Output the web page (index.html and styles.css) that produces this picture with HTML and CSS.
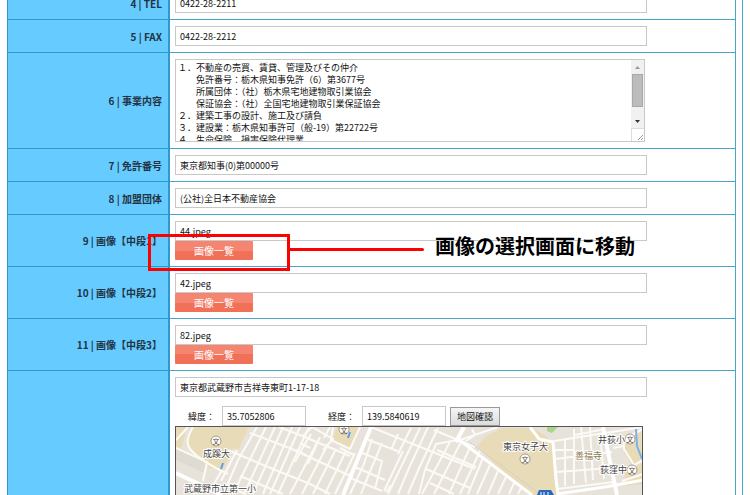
FILE: index.html
```html
<!DOCTYPE html>
<html lang="ja">
<head>
<meta charset="utf-8">
<title>会社情報</title>
<link rel="stylesheet" href="styles.css">
</head>
<body>
<main class="page">
<form>
<table class="form-table">
<tr>
  <th scope="row"><label for="tel">4 | TEL</label></th>
  <td><input class="field" id="tel" type="text" value="0422-28-2211"></td>
</tr>
<tr>
  <th scope="row"><label for="fax">5 | FAX</label></th>
  <td><input class="field" id="fax" type="text" value="0422-28-2212"></td>
</tr>
<tr>
  <th scope="row"><label for="business">6 | 事業内容</label></th>
  <td>
    <div class="area-wrap">
<textarea class="area" id="business">１．不動産の売買、賃貸、管理及びその仲介
　　免許番号：栃木県知事免許（6）第3677号
　　所属団体：（社）栃木県宅地建物取引業協会
　　保証協会：（社）全国宅地建物取引業保証協会
２．建築工事の設計、施工及び請負
３．建設業：栃木県知事許可（般-19）第22722号
４．生命保険、損害保険代理業</textarea>
      <svg class="scroll" width="13" height="81" viewBox="0 0 13 81" aria-hidden="true">
        <rect width="13" height="68" fill="#f1f1f1"/>
        <path d="M4 9L6.500 6L9 9Z" fill="#999"/>
        <rect x="1.500" y="14.500" width="10" height="32" fill="#bcbcbc" stroke="#a8a8a8"/>
        <path d="M4 60H9L6.500 63Z" fill="#333"/>
        <path d="M0 68H13V81H0Z" fill="#fff"/>
        <path d="M0.500 81V68.500H13" fill="none" stroke="#ddd"/>
        <path d="M7 80L12 75M10 80L12 78" stroke="#999" fill="none"/>
      </svg>
    </div>
  </td>
</tr>
<tr>
  <th scope="row"><label for="license">7 | 免許番号</label></th>
  <td><input class="field" id="license" type="text" value="東京都知事(0)第00000号"></td>
</tr>
<tr>
  <th scope="row"><label for="group">8 | 加盟団体</label></th>
  <td><input class="field" id="group" type="text" value="(公社)全日本不動産協会"></td>
</tr>
<tr>
  <th scope="row"><label for="img1">9 | 画像【中段1】</label></th>
  <td class="anchor">
    <input class="field" id="img1" type="text" value="44.jpeg">
    <button class="pick" type="button">画像一覧</button>
    <div class="note"><span class="note-box"></span><span class="note-line"></span><span class="note-text">画像の選択画面に移動</span></div>
  </td>
</tr>
<tr>
  <th scope="row"><label for="img2">10 | 画像【中段2】</label></th>
  <td>
    <input class="field" id="img2" type="text" value="42.jpeg">
    <button class="pick" type="button">画像一覧</button>
  </td>
</tr>
<tr>
  <th scope="row"><label for="img3">11 | 画像【中段3】</label></th>
  <td>
    <input class="field" id="img3" type="text" value="82.jpeg">
    <button class="pick" type="button">画像一覧</button>
  </td>
</tr>
<tr class="last">
  <th></th>
  <td>
    <input class="field" type="text" aria-label="住所" value="東京都武蔵野市吉祥寺東町1-17-18">
    <div class="coords">
      <label for="lat">緯度：</label><input class="field coord" id="lat" type="text" value="35.7052806">
      <label class="second" for="lng">経度：</label><input class="field coord" id="lng" type="text" value="139.5840619">
      <button class="check" type="button">地図確認</button>
    </div>
    <svg class="map" viewBox="176 428 467 68" preserveAspectRatio="xMinYMin slice" role="img" aria-label="地図">
      <rect x="176" y="428" width="467" height="68" fill="#e8e3da"/>
      <path d="M176 447L207 463L204 474L176 461Z" fill="#dfdbd3"/>
      <g fill="#e8dcb8">
        <path d="M193 428H249L238 451L233 449L223 471L209 469L190 451L187 438Z"/>
        <path d="M176 428H187L182 448L176 453Z"/>
        <path d="M337 428H359L350 449L332 441Z"/>
        <path d="M486 437L502 429H533L543 435L553 443L557 496H531L505 475L477 447Z"/>
        <path d="M625 438L641 432L643 462L633 468L624 454Z"/>
        <path d="M624 472L643 464V485L626 487Z"/>
      </g>
      <path d="M547 428H558L552 434L547 432Z" fill="#a9d58b"/>
      <g fill="none" stroke="#fbfaf7" stroke-width="2">
        <path d="M193 428Q184 443 190 450Q200 462 228 475M176 441L188 428M176 449L207 463L203 482M228 451L268 468L310 485L330 495M222 471L214 485M237 451L221 482"/>
        <path d="M257 428L238 461L226 489M266 428L233 495M275 428L244 495M283 428L253 495M292 428L263 495M300 428L270 495M309 428L278 495M318 442L290 495M328 445L302 495M336 450L313 495M346 452L325 495M355 454L335 495"/>
        <path d="M250 434L292 450L335 470L353 478M279 428L300 436L350 457M240 477L283 495M230 489L246 495M302 438L312 428L333 440L323 451"/>
        <path d="M300 444L310 449M296 451L306 456M311 435L302 450L295 463M320 438L308 465M330 428L324 439"/>
        <path d="M333 428L331 441L350 450L360 428M340 449L354 456"/>
        <path d="M371 428L460 464L475 470M366 440L400 453M360 453L382 462L375 490M355 468L385 481M350 479L382 492M372 440L364 465L350 495M382 444L369 475L361 495M392 449L398 435M403 452L384 492M411 429L398 455M420 429L400 470L388 495M428 428L409 469L398 495M438 429L420 467L408 495"/>
        <path d="M434 431L458 441L475 448M458 441L436 445L425 471L419 495M437 451L476 468M426 470L470 489M451 441L422 495M461 443L434 495M471 446L449 495M480 452L460 495M430 484L454 495M391 486L386 493"/>
        <path d="M460 441L498 428M466 442L475 436L472 430M483 459L468 495M490 466L477 495M498 472L488 495M506 478L498 495M514 484L509 495M521 489L518 495"/>
        <path d="M554 442L643 428M555 460L612 453M556 473L611 469M557 490L614 483M565 441V487M574 430V485M581 428L586 484M590 428L593 481M600 434L604 480M554 451H575M575 436L605 430"/>
        <path d="M613 449L624 447M624 437V450L634 466L643 461M622 482L643 475M620 442L643 430"/>
      </g>
      <g fill="none" stroke="#fff">
        <path stroke-width="4" d="M371 428L343 496M176 474L222 496M603 428L609 458L617 496M464 428L456 443"/>
        <path stroke-width="3" d="M530 428L539 440L553 443L556 480L558 496M458 440L532 496M557 495L605 488L643 481"/>
      </g>
      <path d="M468 442L540 495" stroke="#d0cbc0" stroke-dasharray="2 1" fill="none"/>
      <path d="M223 464L221 470M350 433L348 439" stroke="#5b9fe8" stroke-width="2"/>
      <path d="M636 430L637 447L642 460" stroke="#7fb0ed" stroke-width="2" fill="none"/>
      <path d="M539 491H551L554 496H537Z" fill="#2868b8"/>
      <path d="M541 493V496M544 493V496M548 493V496" stroke="#fff"/>
      <g fill="#fff" stroke="#a29a8b">
        <circle cx="216" cy="442" r="5"/><circle cx="344" cy="430" r="5"/><circle cx="525" cy="460" r="5"/><circle cx="630" cy="440" r="5"/><circle cx="632" cy="471" r="5"/>
      </g>
      <g class="mark"><text x="216" y="445">文</text><text x="344" y="434">文</text><text x="525" y="463">文</text><text x="630" y="443">文</text><text x="632" y="474">文</text></g>
      <g class="place">
        <text x="203" y="458">成蹊大</text><text x="184" y="493">武蔵野市立第一小</text><text x="503" y="451">東京女子大</text><text x="598" y="444">井荻小</text><text x="600" y="474">荻窪中</text><text class="area-name" x="575" y="460">善福寺</text>
      </g>
    </svg>
  </td>
</tr>
</table>
</form>
</main>
</body>
</html>
```
FILE: styles.css
```css
* { box-sizing: border-box; }

html { overflow: hidden; }

body {
  margin: 0;
  background: #fff;
  color: #111;
  font-family: "Noto Sans CJK JP", sans-serif;
  font-size: 9px;
}

/* The first row continues above the top of the window. */
.page {
  margin: -13px 7px 0;
  padding-right: 6px;
  border-right: 1px solid #4aa3cb;
}

.form-table {
  width: 100%;
  table-layout: fixed;
  border-spacing: 0;
  border-right: 1px solid #4aa3cb;
}

th {
  width: 163px;
  padding: 0 6px 0 0;
  border-right: 2px solid #3297c9;
  border-bottom: 1px solid #3297c9;
  border-left: 1px solid #3297c9;
  background: #66ccff;
  color: #223344;
  font-size: 10px;
  font-weight: bold;
  text-align: right;
  vertical-align: middle;
}

td {
  padding: 6px 5px;
  border-bottom: 1px solid #4aa3cb;
  vertical-align: top;
}

.last th,
.last td { padding-bottom: 0; border-bottom: 0; }

input, textarea, button { margin: 0; font: inherit; color: inherit; }

.field {
  display: block;
  width: 85%;
  height: 20px;
  padding: 0 4px;
  border: 1px solid #c8c8c8;
  background: #fff;
}

.area-wrap { position: relative; width: 85%; padding-right: 2px; }

.area {
  display: block;
  width: 100%;
  height: 83px;
  padding: 2px;
  overflow: hidden;
  border: 1px solid #c8c8c8;
  line-height: 12px;
  resize: none;
}

.scroll { position: absolute; top: 1px; right: 3px; }

.pick {
  display: block;
  width: 78px;
  height: 19px;
  padding: 0;
  border: 0;
  border-radius: 1px;
  background: linear-gradient(#f58570 50%, #f07058 50%);
  color: #fff;
  font-size: 10px;
  line-height: 19px;
}

.anchor { position: relative; }

.note {
  position: absolute;
  top: 19px;
  left: -22px;
  display: flex;
  align-items: flex-start;
  white-space: nowrap;
}

.note-box { width: 142px; height: 37px; border: 3px solid #f00; }

.note-line {
  width: 134px;
  height: 3px;
  margin-top: 14px;
  border-radius: 0 2px 2px 0;
  background: #f00;
}

.note-text {
  margin-left: 11px;
  color: #000;
  font-size: 20px;
  font-weight: bold;
  line-height: 24px;
}

.coords {
  display: flex;
  align-items: center;
  padding: 9px 0 0 13px;
}

.coords label { width: 34px; }
.coords .second { margin-left: 22px; }
.coord { width: 84px; }

.check {
  width: 50px;
  height: 19px;
  margin-left: 4px;
  padding: 0;
  border: 1px solid #999;
  background: linear-gradient(#f5f5f5, #dcdcdc);
}

.map {
  display: block;
  width: calc(85% - 4px);
  height: 69px;
  border: 1px solid #555;
  border-bottom: 0;
}

.mark { fill: #66513c; font-size: 7px; text-anchor: middle; }

.place {
  fill: #444;
  stroke: #fff;
  stroke-width: 2px;
  paint-order: stroke;
}

.area-name { fill: #8a7b50; }
```
